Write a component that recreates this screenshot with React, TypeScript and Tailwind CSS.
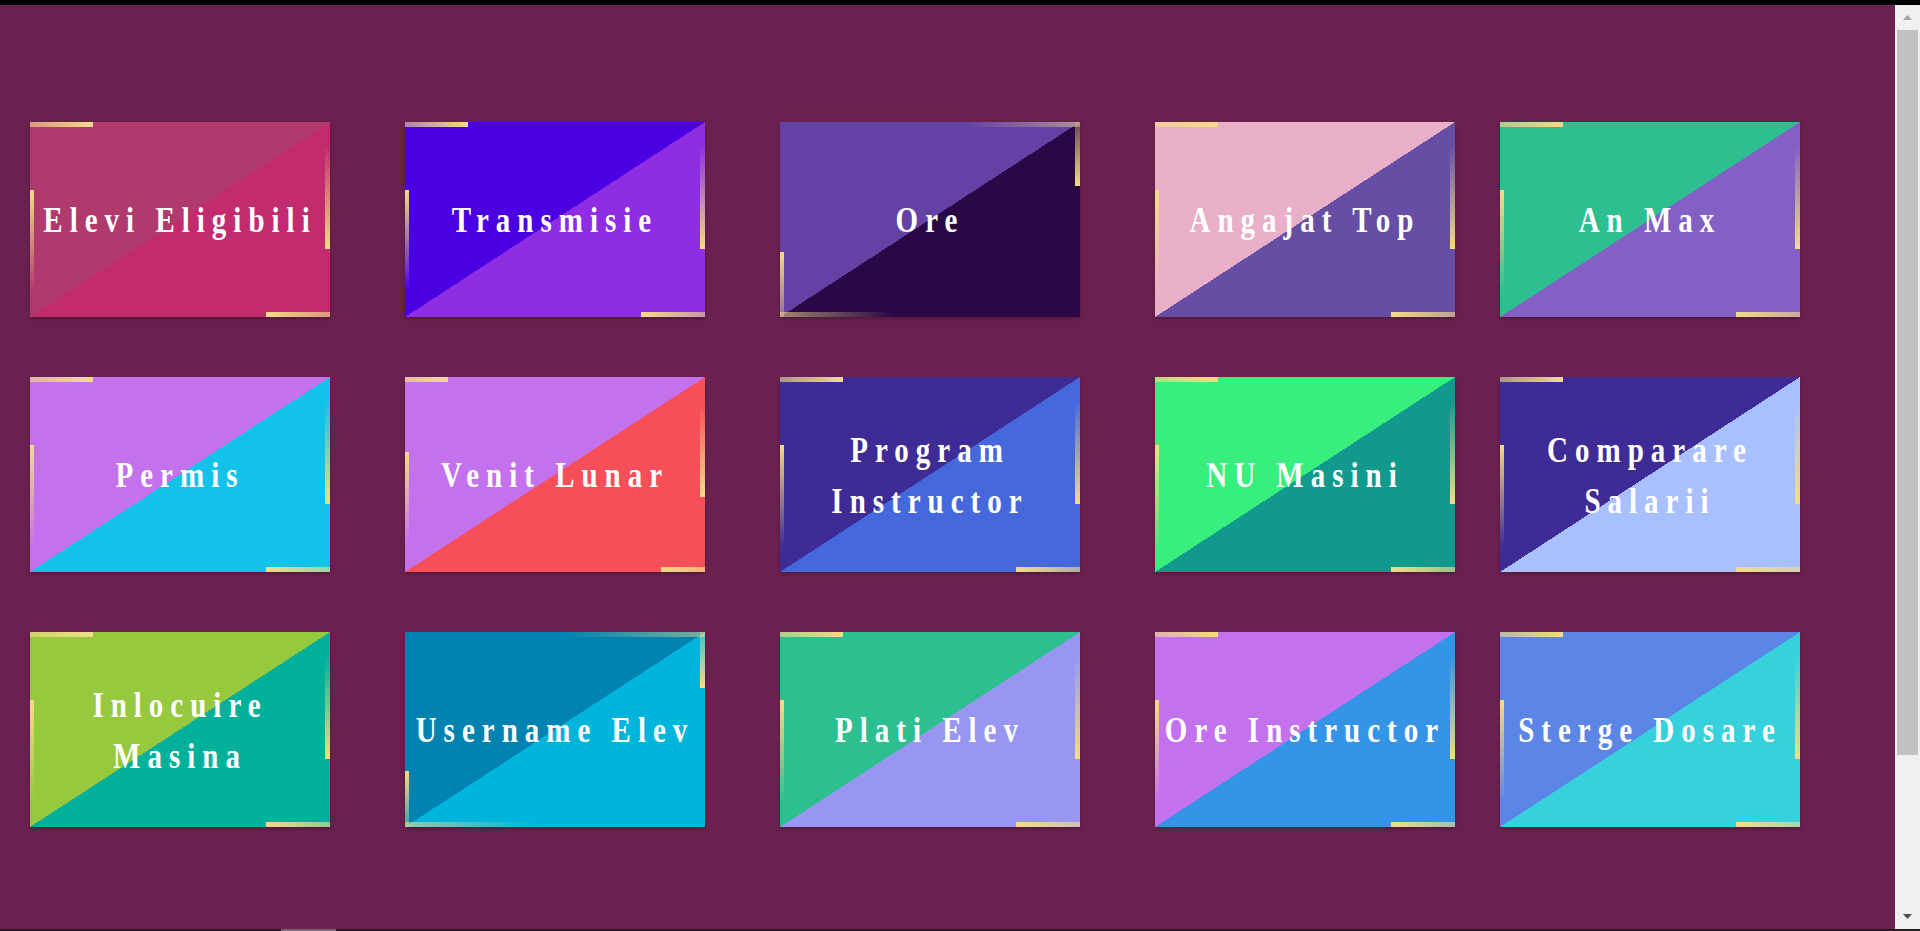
import React from 'react'

type Phase = 'a' | 'short' | 'ore' | 'user'

interface Card {
  label: string
  colors: string
  phase: Phase
}

const rows: Card[][] = [
  [
    { label: 'Elevi Eligibili', colors: 'from-[#b0396e] to-[#c22b6e]', phase: 'a' },
    { label: 'Transmisie', colors: 'from-[#4a00e0] to-[#8e2de2]', phase: 'a' },
    { label: 'Ore', colors: 'from-[#6441a5] to-[#2a0845]', phase: 'ore' },
    { label: 'Angajat Top', colors: 'from-[#eaafc8] to-[#654ea3]', phase: 'a' },
    { label: 'An Max', colors: 'from-[#2ebf91] to-[#8360c3]', phase: 'a' },
  ],
  [
    { label: 'Permis', colors: 'from-[#c471ed] to-[#12c2e9]', phase: 'a' },
    { label: 'Venit Lunar', colors: 'from-[#c471ed] to-[#f64f59]', phase: 'short' },
    { label: 'Program Instructor', colors: 'from-[#3f2b96] to-[#4568dc]', phase: 'a' },
    { label: 'NU Masini', colors: 'from-[#38ef7d] to-[#11998e]', phase: 'a' },
    { label: 'Comparare Salarii', colors: 'from-[#3f2b96] to-[#a8c0ff]', phase: 'a' },
  ],
  [
    { label: 'Inlocuire Masina', colors: 'from-[#96c93d] to-[#00b09b]', phase: 'a' },
    { label: 'Username Elev', colors: 'from-[#0083b0] to-[#00b4db]', phase: 'user' },
    { label: 'Plati Elev', colors: 'from-[#2ebf91] to-[#9796f0]', phase: 'a' },
    { label: 'Ore Instructor', colors: 'from-[#c471ed] to-[#3494e6]', phase: 'a' },
    { label: 'Sterge Dosare', colors: 'from-[#5b86e5] to-[#36d1dc]', phase: 'a' },
  ],
]

// the gold running border, frozen where the screenshot caught it
function Bars({ phase }: { phase: Phase }) {
  if (phase === 'ore') {
    return (
      <>
        <span className="absolute left-[186px] top-0 h-[5px] w-[114px] bg-linear-to-r from-transparent to-[#f3dc87]/50" />
        <span className="absolute right-0 top-0 h-[64px] w-[5px] bg-linear-to-b from-[#f3dc87]/30 to-[#f3dc87]" />
        <span className="absolute bottom-0 left-0 h-[5px] w-[113px] bg-linear-to-r from-[#f3dc87]/60 to-transparent" />
        <span className="absolute left-0 top-[130px] h-[65px] w-[4px] bg-linear-to-b from-[#f3dc87] to-[#f3dc87]/30" />
      </>
    )
  }
  if (phase === 'user') {
    return (
      <>
        <span className="absolute left-[156px] top-0 h-[5px] w-[144px] bg-linear-to-r from-transparent to-[#f3dc87]/50" />
        <span className="absolute right-0 top-0 h-[56px] w-[5px] bg-linear-to-b from-[#f3dc87]/30 to-[#f3dc87]" />
        <span className="absolute bottom-0 left-0 h-[5px] w-[133px] bg-linear-to-r from-[#f3dc87]/60 to-transparent" />
        <span className="absolute left-0 top-[139px] h-[56px] w-[4px] bg-linear-to-b from-[#f3dc87] to-[#f3dc87]/30" />
      </>
    )
  }
  if (phase === 'short') {
    return (
      <>
        <span className="absolute left-0 top-0 h-[5px] w-[43px] bg-linear-to-r from-[#f3dc87]/70 to-[#f3dc87]" />
        <span className="absolute left-0 top-[75px] h-[92px] w-[4px] bg-linear-to-b from-[#f3dc87] to-transparent" />
        <span className="absolute right-0 top-[27px] h-[93px] w-[5px] bg-linear-to-b from-transparent to-[#f3dc87]" />
        <span className="absolute bottom-0 right-0 h-[5px] w-[44px] bg-linear-to-r from-[#f3dc87] to-[#f3dc87]/70" />
      </>
    )
  }
  return (
    <>
      <span className="absolute left-0 top-0 h-[5px] w-[63px] bg-linear-to-r from-[#f3dc87]/60 to-[#f3dc87]" />
      <span className="absolute left-0 top-[68px] h-[102px] w-[4px] bg-linear-to-b from-[#f3dc87] to-transparent" />
      <span className="absolute right-0 top-[23px] h-[104px] w-[5px] bg-linear-to-b from-transparent to-[#f3dc87]" />
      <span className="absolute bottom-0 right-0 h-[5px] w-[64px] bg-linear-to-r from-[#f3dc87] to-[#f3dc87]/60" />
    </>
  )
}

function Tile({ card }: { card: Card }) {
  return (
    <div
      className={`relative flex h-[195px] w-[300px] items-center justify-center overflow-hidden bg-linear-to-br from-50% to-50% px-[2px] shadow-[0_2px_4px_rgba(0,0,0,0.25)] ${card.colors}`}
    >
      <span className="scale-y-[1.22] text-center font-['Liberation_Serif',serif] text-[29px] leading-[42px] font-bold tracking-[7px] text-white">
        {card.label}
      </span>
      <Bars phase={card.phase} />
    </div>
  )
}

function Scrollbar() {
  return (
    <div className="flex w-[25px] shrink-0 flex-col bg-[#f0f0f0]">
      <div className="flex h-[25px] items-center justify-center">
        <svg width="9" height="5" viewBox="0 0 9 5">
          <path d="M0 5 L4.5 0 L9 5 Z" fill="#a3a3a3" />
        </svg>
      </div>
      <div className="mx-[2px] h-[725px] bg-[#c1c1c1]" />
      <div className="flex-1" />
      <div className="flex h-[25px] items-center justify-center">
        <svg width="9" height="5" viewBox="0 0 9 5">
          <path d="M0 0 L9 0 L4.5 5 Z" fill="#505050" />
        </svg>
      </div>
    </div>
  )
}

export default function App() {
  return (
    <div className="flex h-[931px] w-full flex-col overflow-hidden bg-black">
      <div className="h-[5px] shrink-0" />
      <div className="flex min-h-0 flex-1">
        <main className="flex-1 bg-[#6b214f] pl-[30px] pt-[117px]">
          <div className="grid grid-cols-[375px_375px_375px_345px_300px] gap-y-[60px]">
            {rows.flat().map(card => (
              <Tile key={card.label} card={card} />
            ))}
          </div>
        </main>
        <Scrollbar />
      </div>
      <div className="flex h-[2px] shrink-0 bg-[#1f1f1f]">
        <div className="ml-[281px] w-[55px] bg-[#6d6d6d]" />
      </div>
    </div>
  )
}
